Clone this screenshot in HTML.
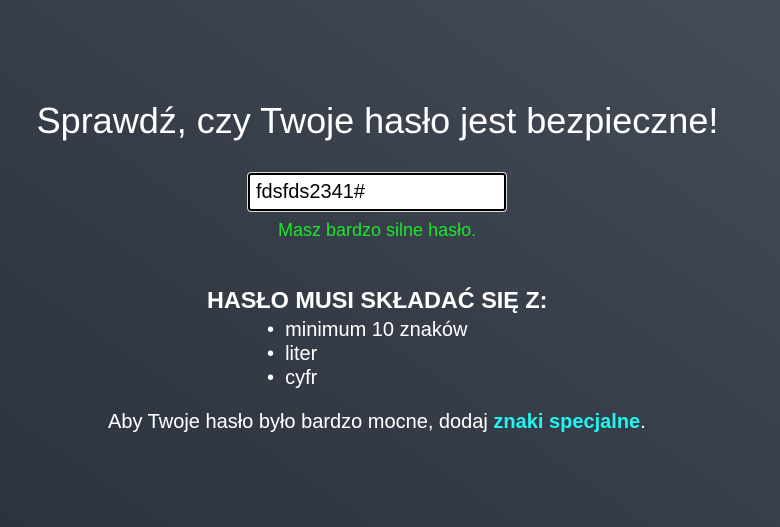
<!DOCTYPE html>
<html><head><meta charset="utf-8"><style>
html,body{margin:0;width:780px;height:527px;overflow:hidden}
body{background:linear-gradient(35deg,#2d333d 0%,#363d48 45%,#444c58 100%);font-family:"Liberation Sans","Noto Sans CJK SC",sans-serif;color:#fff;position:relative}
.a{position:absolute;white-space:nowrap}
h1{position:absolute;left:0;width:755px;text-align:center;top:100px;margin:0;font-weight:normal;font-size:36px}
.inp{position:absolute;left:248px;top:173px;height:34px;background:#fff;border:2px solid #000;box-shadow:0 0 0 1px #ddd;border-radius:3px;color:#000;font-size:20px;line-height:34px;padding-left:6px;box-sizing:content-box;width:248px}
</style></head><body>
<h1>Sprawdź, czy Twoje hasło jest bezpieczne!</h1>
<div class="inp">fdsfds2341#</div>
<div class="a" style="left:278px;top:220px;font-size:18px;color:#1be52b">Masz bardzo silne hasło.</div>
<div class="a" style="left:207px;top:287px;font-size:23.4px;font-weight:bold">HASŁO MUSI SKŁADAĆ SIĘ Z:</div>
<div class="a" style="left:267px;top:318px;font-size:20px;line-height:24px">•&nbsp;&nbsp;minimum 10 znaków<br>•&nbsp;&nbsp;liter<br>•&nbsp;&nbsp;cyfr</div>
<div class="a" style="left:108px;top:411px;font-size:20px">Aby Twoje hasło było bardzo mocne, dodaj <b style="color:#1ff5ee">znaki specjalne</b>.</div>
</body></html>
